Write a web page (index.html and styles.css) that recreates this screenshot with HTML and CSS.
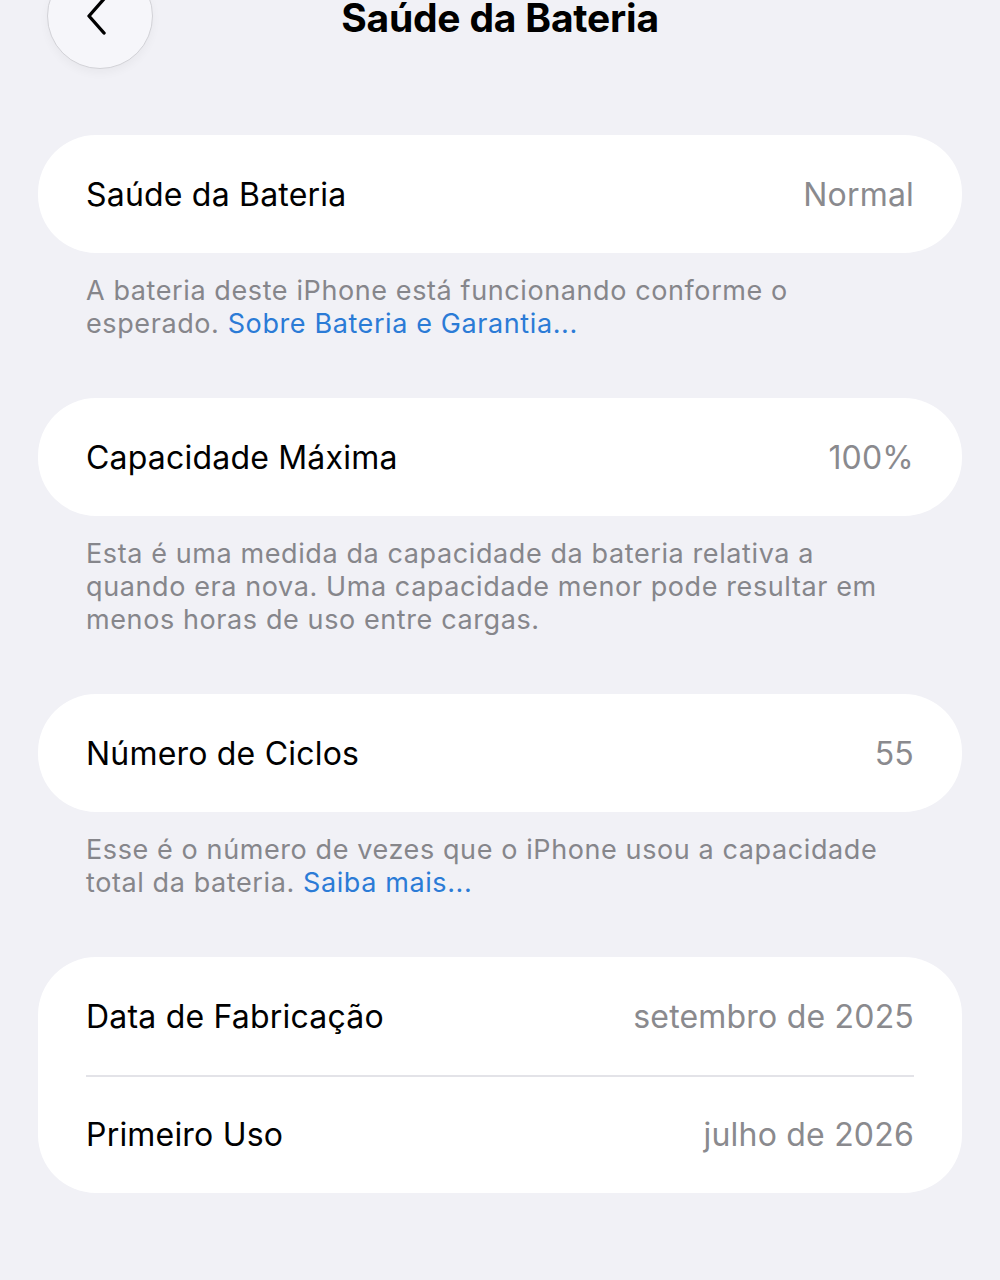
FILE: index.html
```html
<!DOCTYPE html>
<html lang="pt-BR">

<head>
    <meta charset="UTF-8">
    <meta name="viewport" content="width=device-width, initial-scale=1.0">
    <title>Saúde da Bateria</title>
    <link rel="stylesheet" href="styles.css">
</head>

<body>
    <!-- Navigation bar -->
    <header class="nav">
        <button class="back-btn" aria-label="Voltar">
            <svg width="22" height="38" viewBox="0 0 22 38">
                <path d="M18 2 L3 19 L18 36" fill="none" stroke="#000" stroke-width="3.4" stroke-linecap="round" stroke-linejoin="round"/>
            </svg>
        </button>
        <h1 class="nav-title">Saúde da Bateria</h1>
    </header>

    <main class="content">
        <section class="group">
            <div class="card">
                <div class="row">
                    <span class="label">Saúde da Bateria</span>
                    <span class="value">Normal</span>
                </div>
            </div>
            <p class="footer">A bateria deste iPhone está funcionando conforme o esperado. <a href="#">Sobre Bateria e Garantia...</a></p>
        </section>

        <section class="group">
            <div class="card">
                <div class="row">
                    <span class="label">Capacidade Máxima</span>
                    <span class="value">100%</span>
                </div>
            </div>
            <p class="footer">Esta é uma medida da capacidade da bateria relativa a quando era nova. Uma capacidade menor pode resultar em menos horas de uso entre cargas.</p>
        </section>

        <section class="group">
            <div class="card">
                <div class="row">
                    <span class="label">Número de Ciclos</span>
                    <span class="value">55</span>
                </div>
            </div>
            <p class="footer">Esse é o número de vezes que o iPhone usou a capacidade total da bateria. <a href="#">Saiba mais...</a></p>
        </section>

        <section class="group">
            <div class="card">
                <div class="row">
                    <span class="label">Data de Fabricação</span>
                    <span class="value">setembro de 2025</span>
                </div>
                <div class="row">
                    <span class="label">Primeiro Uso</span>
                    <span class="value">julho de 2026</span>
                </div>
            </div>
        </section>
    </main>
</body>

</html>
```

FILE: styles.css
```css
/* Base */
body {
    margin: 0;
    font-family: Inter, 'Noto Sans', sans-serif;
    background-color: #f1f1f6;
    color: #000;
    height: 1280px;
    overflow: hidden;
}

/* Navigation bar */
.nav {
    display: flex;
    align-items: center;
    height: 70px;
    padding: 0 47px;
    position: relative;
}

.back-btn {
    width: 106px;
    height: 106px;
    margin-top: -38px;
    border-radius: 50%;
    border: 1px solid #d2d2d7;
    background-color: #f6f6fa;
    box-shadow: 0 4px 10px rgba(0, 0, 0, 0.04);
    display: flex;
    align-items: center;
    justify-content: center;
    padding: 0;
    cursor: pointer;
}

.back-btn svg {
    margin-right: 6px;
}

.nav-title {
    position: absolute;
    left: 0;
    right: 0;
    top: -6px;
    margin: 0;
    text-align: center;
    font-size: 39px;
    font-weight: 700;
    letter-spacing: -0.2px;
    pointer-events: none;
}

/* List content */
.content {
    display: flex;
    flex-direction: column;
    gap: 58px;
    padding: 65px 38px 0;
}

.card {
    background-color: #fff;
    border-radius: 58px;
}

.row {
    display: flex;
    justify-content: space-between;
    align-items: center;
    height: 118px;
    padding: 0 48px;
    font-size: 32px;
    letter-spacing: 0.2px;
}

.row + .row {
    position: relative;
}

.row + .row:before {
    content: '';
    position: absolute;
    top: 0;
    left: 48px;
    right: 48px;
    height: 2px;
    background-color: #e3e3e8;
}

.value {
    color: #8a8a8e;
}

.footer {
    max-width: 810px;
    margin: 21px 48px 0;
    font-size: 27px;
    line-height: 33px;
    letter-spacing: 0.6px;
    color: #86868b;
}

.footer a {
    color: #2b7bd6;
    text-decoration: none;
}
```
